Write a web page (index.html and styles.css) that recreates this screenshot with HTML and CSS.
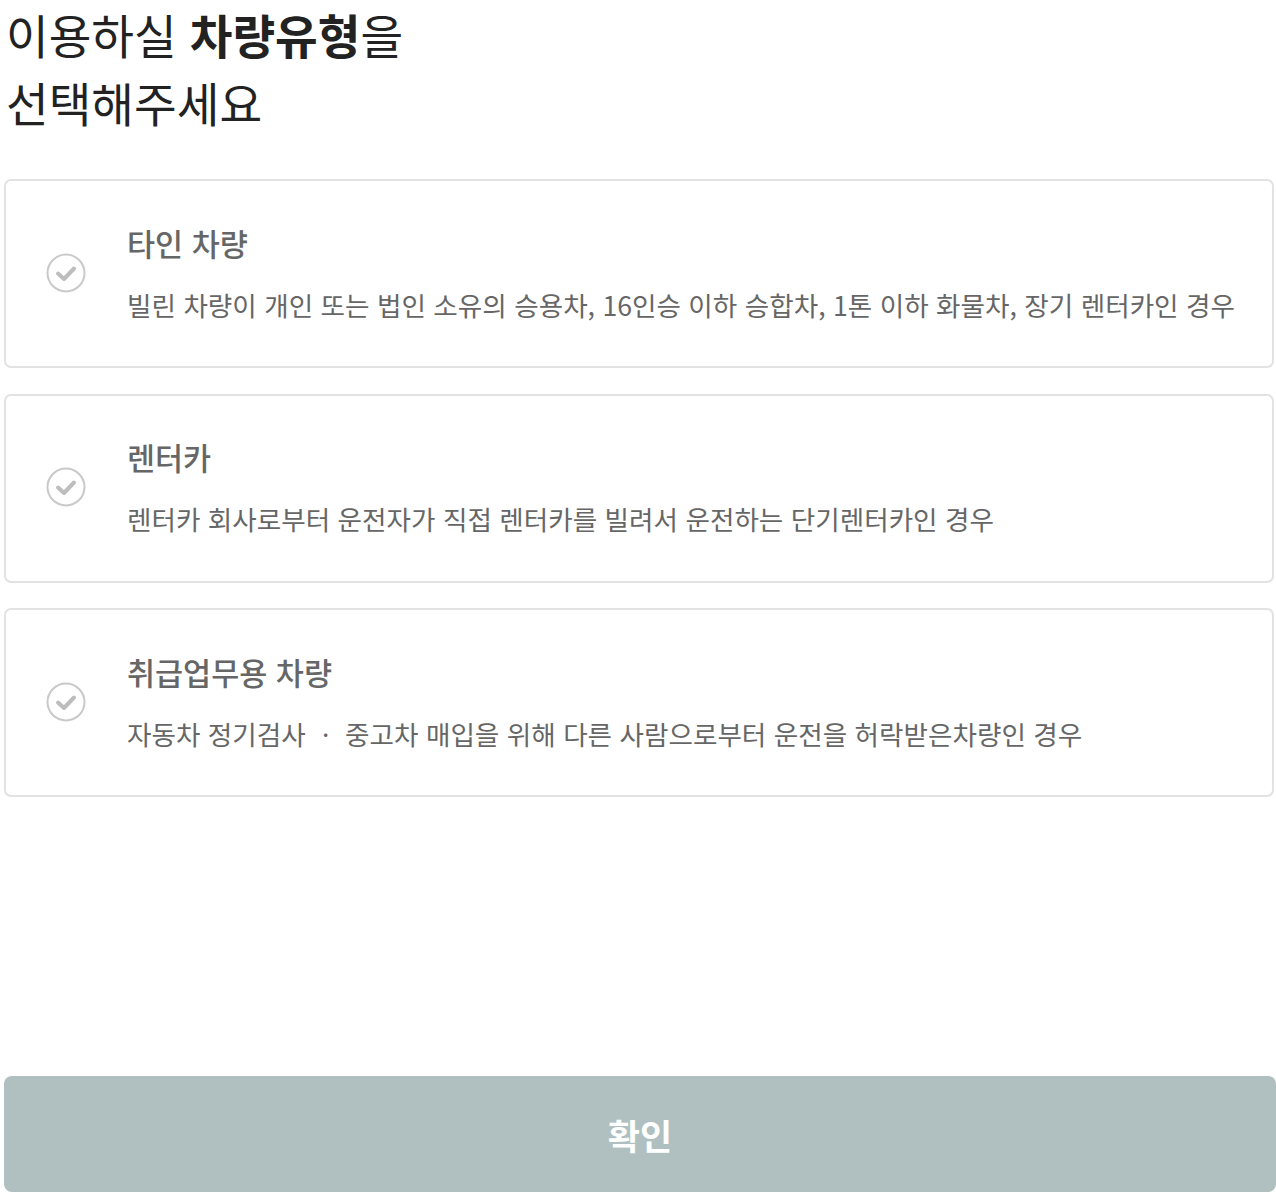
FILE: index.html
```html
<!DOCTYPE html>
<html lang="ko">
<head>
  <meta charset="utf-8" />
  <title>차량유형 선택</title>
  <link rel="stylesheet" href="styles.css">
</head>
<body>
<div class="page">
  <h1 class="headline">이용하실 <b>차량유형</b>을<br/>선택해주세요</h1>

  <ul class="options">
    <li class="option">
      <span class="check">
        <svg width="40" height="40" viewBox="0 0 40 40"><circle cx="20" cy="20" r="18.5" fill="none" stroke="#c9c9c9" stroke-width="2"/><path d="M12 20.5 L18 26 L28 15.5" fill="none" stroke="#bdbdbd" stroke-width="4" stroke-linecap="round" stroke-linejoin="round"/></svg>
      </span>
      <div class="option-text">
        <div class="option-title">타인 차량</div>
        <div class="option-desc">빌린 차량이 개인 또는 법인 소유의 승용차, 16인승 이하 승합차, 1톤 이하 화물차, 장기 렌터카인 경우</div>
      </div>
    </li>
    <li class="option">
      <span class="check">
        <svg width="40" height="40" viewBox="0 0 40 40"><circle cx="20" cy="20" r="18.5" fill="none" stroke="#c9c9c9" stroke-width="2"/><path d="M12 20.5 L18 26 L28 15.5" fill="none" stroke="#bdbdbd" stroke-width="4" stroke-linecap="round" stroke-linejoin="round"/></svg>
      </span>
      <div class="option-text">
        <div class="option-title">렌터카</div>
        <div class="option-desc">렌터카 회사로부터 운전자가 직접 렌터카를 빌려서 운전하는 단기렌터카인 경우</div>
      </div>
    </li>
    <li class="option">
      <span class="check">
        <svg width="40" height="40" viewBox="0 0 40 40"><circle cx="20" cy="20" r="18.5" fill="none" stroke="#c9c9c9" stroke-width="2"/><path d="M12 20.5 L18 26 L28 15.5" fill="none" stroke="#bdbdbd" stroke-width="4" stroke-linecap="round" stroke-linejoin="round"/></svg>
      </span>
      <div class="option-text">
        <div class="option-title">취급업무용 차량</div>
        <div class="option-desc">자동차 정기검사 ㆍ 중고차 매입을 위해 다른 사람으로부터 운전을 허락받은차량인 경우</div>
      </div>
    </li>
  </ul>

  <button class="confirm" type="button">확인</button>
</div>
</body>
</html>
```

FILE: styles.css
```css
body {
  margin: 0;
  background: #fff;
  font-family: "Noto Sans CJK KR", "Noto Sans", sans-serif;
}
.page {
  padding: 0 2px 0 4px;
  display: flex;
  flex-direction: column;
  min-height: 1200px;
  box-sizing: border-box;
}
.headline {
  margin: 0;
  padding: 0 0 0 2px;
  font-size: 46.4px;
  line-height: 68px;
  font-weight: 400;
  color: #222;
}
.headline b {
  font-weight: 700;
}
.options {
  list-style: none;
  margin: 43px 0 0 0;
  padding: 0;
  display: flex;
  flex-direction: column;
  gap: 25.5px;
}
.option {
  display: flex;
  align-items: center;
  height: 189px;
  box-sizing: border-box;
  border: 2px solid #e2e2e2;
  border-radius: 7px;
  padding: 0 0 2px 40px;
}
.check {
  display: flex;
  width: 40px;
  height: 40px;
  margin-right: 41px;
}
.option-title {
  font-size: 30.5px;
  font-weight: 500;
  color: #666;
  line-height: 40px;
}
.option-desc {
  font-size: 26.6px;
  color: #666;
  line-height: 36px;
  margin-top: 24px;
}
.confirm {
  margin: auto -2px 8px 0;
  height: 116px;
  border: 0;
  border-radius: 8px;
  background: #b0bfbf;
  color: #fff;
  font-family: inherit;
  font-size: 35px;
  font-weight: 700;
}
```
